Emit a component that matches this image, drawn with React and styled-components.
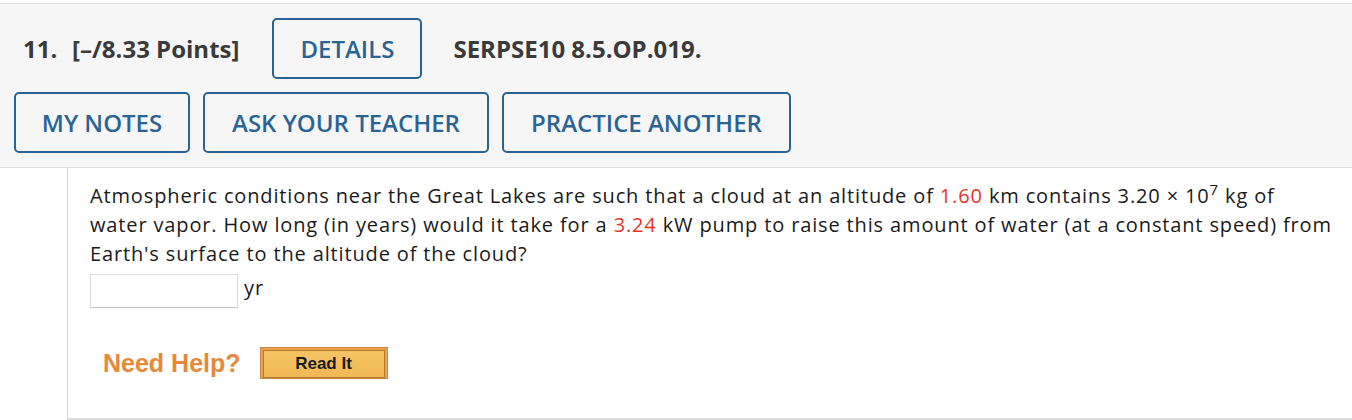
import React from 'react'
import styled, { createGlobalStyle } from 'styled-components'

const GlobalStyle = createGlobalStyle`
  html, body {
    margin: 0;
    padding: 0;
    background: #fff;
  }
`

const Page = styled.div`
  width: 1352px;
  height: 420px;
  padding-top: 3px;
  box-sizing: border-box;
  overflow: hidden;
`

const Header = styled.div`
  background: #f6f6f6;
  border-top: 1px solid #dcdcdc;
  border-bottom: 1px solid #dcdcdc;
  padding: 14px 0 14px 14px;
  font-family: "Open Sans", "Liberation Sans", sans-serif;
`

const TopRow = styled.div`
  display: flex;
  align-items: center;
  margin-bottom: 13px;
`

const HeadText = styled.span`
  font-weight: 700;
  font-size: 24px;
  color: #3a3a3a;
`

const Number = styled(HeadText)`
  margin-left: 9px;
  width: 49px;
`

const Points = styled(HeadText)`
  margin-right: 33px;
`

const Code = styled(HeadText)`
  margin-left: 31px;
`

const ButtonRow = styled.div`
  display: flex;
  gap: 13px;
`

const OutlineButton = styled.button`
  box-sizing: border-box;
  height: 61px;
  width: ${p => p.w}px;
  background: #f6f6f6;
  border: 2px solid #2a6496;
  border-radius: 5px;
  color: #2a6496;
  font-family: "Open Sans", "Liberation Sans", sans-serif;
  font-weight: 600;
  font-size: 24px;
  padding: 0;
  cursor: pointer;
`

const Body = styled.div`
  margin-left: 67px;
  border-left: 1px solid #d6d6d6;
  border-bottom: 2px solid #dcdcdc;
  padding: 13px 0 20px 22px;
  height: 252px;
  box-sizing: border-box;
`

const Question = styled.p`
  margin: 0;
  font-family: "Open Sans", "Liberation Sans", sans-serif;
  font-size: 20px;
  letter-spacing: 0.86px;
  line-height: 29px;
  color: #1a1a1a;
  white-space: nowrap;
`

const Red = styled.span`
  color: #e8322c;
`

const Sup = styled.sup`
  font-size: 15px;
  line-height: 0;
  vertical-align: 8px;
`

const AnswerRow = styled.div`
  display: flex;
  align-items: center;
  gap: 6px;
  margin-top: 6px;
`

const Input = styled.input`
  box-sizing: border-box;
  width: 148px;
  height: 34px;
  border: 1px solid #dcdcdc;
  border-bottom-color: #c4c4c4;
  background: #fff;
`

const Unit = styled.span`
  font-family: "Open Sans", "Liberation Sans", sans-serif;
  font-size: 20px;
  letter-spacing: 0.86px;
  color: #1a1a1a;
  margin-top: -8px;
`

const HelpRow = styled.div`
  display: flex;
  align-items: center;
  gap: 19px;
  margin: 39px 0 0 13px;
`

const NeedHelp = styled.span`
  font-family: "Liberation Sans", Arial, sans-serif;
  font-weight: 700;
  font-size: 25px;
  color: #e6893a;
`

const ReadIt = styled.button`
  box-sizing: border-box;
  width: 128px;
  height: 32px;
  padding: 2px;
  border: 1px solid #c68a4a;
  background: #eba14c;
  cursor: pointer;

  span {
    display: flex;
    align-items: center;
    justify-content: center;
    height: 100%;
    border: 1px solid #b8772f;
    background: linear-gradient(#f5c465, #f1b955);
    font-family: "Liberation Sans", Arial, sans-serif;
    font-weight: 700;
    font-size: 17px;
    color: #1a1a1a;
  }
`

export default function App() {
  return (
    <Page>
      <GlobalStyle />
      <Header>
        <TopRow>
          <Number>11.</Number>
          <Points>[–/8.33 Points]</Points>
          <OutlineButton w={150}>DETAILS</OutlineButton>
          <Code>SERPSE10 8.5.OP.019.</Code>
        </TopRow>
        <ButtonRow>
          <OutlineButton w={176}>MY NOTES</OutlineButton>
          <OutlineButton w={286}>ASK YOUR TEACHER</OutlineButton>
          <OutlineButton w={289}>PRACTICE ANOTHER</OutlineButton>
        </ButtonRow>
      </Header>
      <Body>
        <Question>
          Atmospheric conditions near the Great Lakes are such that a cloud at an altitude of <Red>1.60</Red> km
          contains 3.20 × 10<Sup>7</Sup> kg of
          <br />
          water vapor. How long (in years) would it take for a <Red>3.24</Red> kW pump to raise this amount of
          water (at a constant speed) from
          <br />
          Earth's surface to the altitude of the cloud?
        </Question>
        <AnswerRow>
          <Input type="text" />
          <Unit>yr</Unit>
        </AnswerRow>
        <HelpRow>
          <NeedHelp>Need Help?</NeedHelp>
          <ReadIt>
            <span>Read It</span>
          </ReadIt>
        </HelpRow>
      </Body>
    </Page>
  )
}
